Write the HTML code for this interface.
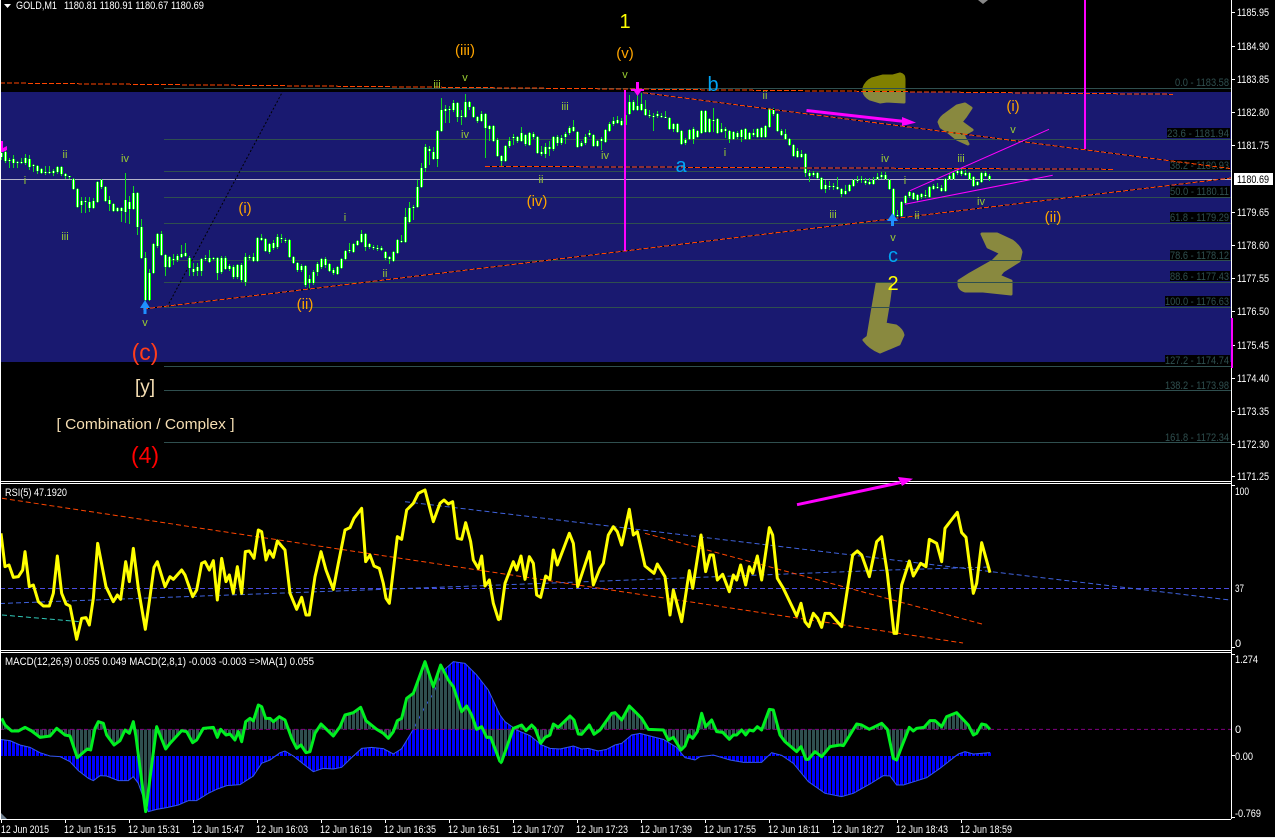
<!DOCTYPE html>
<html><head><meta charset="utf-8"><title>GOLD,M1</title>
<style>
html,body{margin:0;padding:0;background:#000}
svg{display:block;font-family:"Liberation Sans",sans-serif}
.a{fill:#fff;font-size:11px}
.f{fill:#2f4f4f;font-size:11px;text-anchor:end}
.s{fill:#9acd32;font-size:11px;text-anchor:middle}
.o{fill:#ffa500;font-size:15px;text-anchor:middle}
.b{fill:#00a5f5;font-size:20px;text-anchor:middle}
</style></head><body>
<svg width="1275" height="838" viewBox="0 0 1275 838" xmlns="http://www.w3.org/2000/svg">
<defs>
<linearGradient id="ol" gradientUnits="userSpaceOnUse" x1="0" y1="0" x2="0" y2="838"><stop offset=".1098" stop-color="#808000"/><stop offset=".1098" stop-color="#89893f"/></linearGradient>
<pattern id="pb" patternUnits="userSpaceOnUse" width="12" height="12"><rect width="9" height="12" fill="#0000ff"/></pattern>
<pattern id="pg" patternUnits="userSpaceOnUse" width="12" height="12"><rect width="9" height="12" fill="#2f4f4f"/></pattern>
<path id="bd" d="M1.5 153V157M5.5 152V161M9.5 160V161M13.5 159V163M17.5 162V163M21.5 162V163M25.5 158V163M29.5 159V167M33.5 165V166M37.5 166V171M41.5 169V173M45.5 172V173M49.5 172V173M53.5 171V173M57.5 167V172M61.5 167V174M65.5 174V176M69.5 176V177M73.5 179V189M77.5 189V207M81.5 201V205M85.5 201V202M89.5 202V208M93.5 201V208M97.5 182V202M101.5 180V187M105.5 187V201M109.5 200V204M113.5 204V211M117.5 208V211M121.5 208V211M125.5 200V212M129.5 202V209M133.5 193V209M137.5 193V227M141.5 227V258M145.5 258V300M149.5 273V300M153.5 244V273M157.5 234V246M161.5 234V255M165.5 255V267M169.5 257V267M173.5 259V260M177.5 256V260M181.5 254V257M185.5 253V256M189.5 258V268M193.5 269V272M197.5 267V271M201.5 259V271M205.5 258V259M209.5 258V262M213.5 258V259M217.5 258V273M221.5 258V272M225.5 258V269M229.5 266V269M233.5 267V277M237.5 265V277M241.5 265V280M245.5 257V282M249.5 257V258M253.5 257V261M257.5 238V261M261.5 238V240M265.5 239V251M269.5 244V252M273.5 243V248M277.5 237V247M281.5 238V239M285.5 240V241M289.5 240V257M293.5 257V263M297.5 263V270M301.5 266V270M305.5 266V285M309.5 279V283M313.5 272V283M317.5 264V272M321.5 259V267M325.5 259V265M329.5 264V271M333.5 270V273M337.5 267V274M341.5 259V268M345.5 251V259M349.5 250V251M353.5 244V252M357.5 241V245M361.5 234V242M365.5 234V247M369.5 244V247M373.5 247V248M377.5 248V249M381.5 248V250M385.5 252V258M389.5 257V259M393.5 252V261M397.5 240V253M401.5 241V242M405.5 217V242M409.5 208V222M413.5 207V208M417.5 187V207M421.5 168V187M425.5 147V168M429.5 149V151M433.5 152V159M437.5 131V159M441.5 110V131M445.5 109V111M449.5 109V110M453.5 103V110M457.5 103V117M461.5 116V117M465.5 102V117M469.5 102V107M473.5 107V117M477.5 117V121M481.5 114V121M485.5 114V128M489.5 126V129M493.5 126V141M497.5 140V156M501.5 156V161M505.5 146V161M509.5 141V146M513.5 137V138M517.5 137V141M521.5 133V141M525.5 135V144M529.5 133V145M533.5 134V137M537.5 137V153M541.5 152V154M545.5 147V154M549.5 147V149M553.5 137V149M557.5 137V143M561.5 138V143M565.5 134V137M569.5 128V133M573.5 127V131M577.5 132V147M581.5 143V146M585.5 137V143M589.5 133V135M593.5 135V146M597.5 141V146M601.5 139V141M605.5 130V142M609.5 124V131M613.5 121V124M617.5 120V123M621.5 121V125M625.5 115V125M629.5 102V114M633.5 102V110M637.5 106V110M641.5 104V110M645.5 109V115M649.5 115V116M653.5 116V117M657.5 114V116M661.5 116V117M665.5 117V118M669.5 118V129M673.5 124V129M677.5 124V132M681.5 131V144M685.5 140V143M689.5 130V139M693.5 129V139M697.5 131V137M701.5 111V133M705.5 111V132M709.5 119V132M713.5 120V121M717.5 119V133M721.5 129V132M725.5 129V131M729.5 131V139M733.5 132V139M737.5 133V137M741.5 130V137M745.5 129V139M749.5 133V139M753.5 133V135M757.5 129V137M761.5 128V137M765.5 126V137M769.5 109V127M773.5 109V114M777.5 114V131M781.5 131V135M785.5 134V139M789.5 139V145M793.5 145V156M797.5 151V157M801.5 154V157M805.5 154V173M809.5 173V176M813.5 173V175M817.5 173V178M821.5 178V189M825.5 185V189M829.5 186V187M833.5 186V187M837.5 187V189M841.5 189V194M845.5 191V194M849.5 185V191M853.5 180V186M857.5 180V181M861.5 179V180M865.5 181V183M869.5 182V184M873.5 180V184M877.5 177V179M881.5 175V177M885.5 175V179M889.5 180V189M893.5 189V216M897.5 215V216M901.5 202V216M905.5 196V203M909.5 192V196M913.5 193V199M917.5 195V200M921.5 194V197M925.5 195V196M929.5 187V197M933.5 186V189M937.5 187V188M941.5 188V191M945.5 179V191M949.5 176V179M953.5 173V179M957.5 171V173M961.5 171V174M965.5 173V175M969.5 173V179M973.5 177V186M977.5 182V185M981.5 173V182M985.5 173V176M989.5 176V179"/>
</defs>

<!-- main window -->
<rect x="1" y="92" width="1230" height="270" fill="#191970"/>

<!-- drawn blobs -->
<g fill="url(#ol)" stroke="url(#ol)" stroke-width="3" stroke-linejoin="round">
<path d="M864 88Q866 82 872 79L883 76 893 76 900 74Q904 75 904 79L904 102 887 101 880 102 870 99Q865 96 864 92Z"/>
<path d="M939 122Q941 117 946 114L957 106 965 104 971 108 965 117 961 122 972 130 963 135 968 144 957 139 947 131 941 127Z"/>
<path d="M982 234L997 234 1012 241Q1020 247 1021 252L1019 261 1003 271 999 276 1011 281 1011 294 983 291 965 291Q959 289 959 284L959 281 970 274 993 261 1001 253 988 247Z"/>
<path d="M877 284L891 284 889 300 885 324 896 326Q902 330 903 335L899 344 880 352Q870 348 864 340L868 337 872 313Z"/>
</g>

<!-- fibo levels -->
<g stroke="#2f4f4f" stroke-width="1" fill="none" shape-rendering="crispEdges">
<path d="M164 88.5H1231M164 139.5H1231M164 171.5H1231M164 197.5H1231M164 223.5H1231M164 260.5H1231M164 282.5H1231M164 307.5H1231M164 366.5H1231M164 390.5H1231M164 442.5H1231"/>
</g>
<g fill="#000">
<rect x="1167" y="128" width="63" height="10"/><rect x="1170" y="160" width="60" height="10"/><rect x="1170" y="186" width="60" height="11"/><rect x="1170" y="212" width="60" height="10"/><rect x="1170" y="250" width="60" height="10"/><rect x="1170" y="271" width="60" height="10"/><rect x="1165" y="296" width="65" height="10"/><rect x="1165" y="355" width="65" height="7"/>
</g>
<g>
<text class="f" x="1229" y="86" textLength="54" lengthAdjust="spacingAndGlyphs">0.0 - 1183.58</text>
<text class="f" x="1229" y="137" textLength="62" lengthAdjust="spacingAndGlyphs">23.6 - 1181.94</text>
<text class="f" x="1229" y="169" textLength="59" lengthAdjust="spacingAndGlyphs">38.2 - 1180.93</text>
<text class="f" x="1229" y="195" textLength="59" lengthAdjust="spacingAndGlyphs">50.0 - 1180.11</text>
<text class="f" x="1229" y="221" textLength="59" lengthAdjust="spacingAndGlyphs">61.8 - 1179.29</text>
<text class="f" x="1229" y="259" textLength="59" lengthAdjust="spacingAndGlyphs">78.6 - 1178.12</text>
<text class="f" x="1229" y="280" textLength="59" lengthAdjust="spacingAndGlyphs">88.6 - 1177.43</text>
<text class="f" x="1229" y="305" textLength="64" lengthAdjust="spacingAndGlyphs">100.0 - 1176.63</text>
<text class="f" x="1229" y="364" textLength="64" lengthAdjust="spacingAndGlyphs">127.2 - 1174.74</text>
<text class="f" x="1229" y="389" textLength="64" lengthAdjust="spacingAndGlyphs">138.2 - 1173.98</text>
<text class="f" x="1229" y="441" textLength="64" lengthAdjust="spacingAndGlyphs">161.8 - 1172.34</text>
</g>

<!-- bid line -->
<path d="M1 179.5H1231" stroke="#b4b4c8" stroke-width="1" shape-rendering="crispEdges"/>

<!-- black dotted -->
<path d="M167 307L284 89" stroke="#000" stroke-width="1" stroke-dasharray="2 2" fill="none"/>

<!-- candles: wicks -->
<path shape-rendering="crispEdges" fill="none" stroke="#10dc20" stroke-width="1" d="M1.5 150V160M5.5 150V163M9.5 158V168M13.5 155V168M17.5 161V168M21.5 158V164M25.5 154V165M29.5 155V170M33.5 164V172M37.5 165V174M41.5 168V174M45.5 166V175M49.5 166V174M53.5 169V176M57.5 166V174M61.5 166V176M65.5 173V179M69.5 176V179M73.5 178V190M77.5 188V208M81.5 197V213M85.5 197V213M89.5 197V212M93.5 198V209M97.5 181V203M101.5 179V189M105.5 186V202M109.5 196V211M113.5 203V212M117.5 207V212M121.5 207V222M125.5 173V223M129.5 196V224M133.5 186V210M137.5 192V235M141.5 219V259M145.5 252V305M149.5 269V301M153.5 243V274M157.5 233V248M161.5 231V256M165.5 254V276M169.5 256V268M173.5 254V265M177.5 254V262M181.5 245V258M185.5 243V257M189.5 256V276M193.5 263V276M197.5 263V276M201.5 258V276M205.5 255V261M209.5 250V263M213.5 257V260M217.5 257V280M221.5 256V274M225.5 256V270M229.5 264V271M233.5 265V279M237.5 264V279M241.5 263V282M245.5 253V286M249.5 255V260M253.5 253V262M257.5 237V262M261.5 234V241M265.5 238V252M269.5 243V254M273.5 240V250M277.5 234V249M281.5 234V243M285.5 238V243M289.5 239V258M293.5 256V264M297.5 262V272M301.5 264V272M305.5 265V287M309.5 275V289M313.5 270V285M317.5 262V276M321.5 258V269M325.5 257V268M329.5 263V272M333.5 268V275M337.5 266V275M341.5 258V269M345.5 250V260M349.5 243V253M353.5 243V253M357.5 240V246M361.5 230V243M365.5 233V251M369.5 243V249M373.5 245V250M377.5 245V251M381.5 246V251M385.5 251V260M389.5 256V264M393.5 251V262M397.5 239V254M401.5 235V243M405.5 208V243M409.5 202V223M413.5 205V220M417.5 180V208M421.5 163V188M425.5 144V172M429.5 146V165M433.5 147V160M437.5 130V167M441.5 98V132M445.5 105V123M449.5 106V123M453.5 100V112M457.5 102V122M461.5 110V125M465.5 94V118M469.5 101V110M473.5 106V118M477.5 116V123M481.5 111V122M485.5 113V158M489.5 125V141M493.5 125V142M497.5 138V157M501.5 155V167M505.5 145V162M509.5 137V148M513.5 134V145M517.5 136V143M521.5 127V142M525.5 134V146M529.5 132V146M533.5 132V139M537.5 136V154M541.5 146V156M545.5 143V158M549.5 141V156M553.5 136V151M557.5 135V146M561.5 135V145M565.5 132V144M569.5 126V135M573.5 120V132M577.5 131V148M581.5 141V147M585.5 134V145M589.5 130V137M593.5 134V147M597.5 140V147M601.5 137V150M605.5 129V143M609.5 122V132M613.5 117V126M617.5 116V124M621.5 118V126M625.5 113V126M629.5 95V115M633.5 100V111M637.5 90V111M641.5 93V111M645.5 100V116M649.5 110V118M653.5 113V131M657.5 111V118M661.5 113V118M665.5 111V118M669.5 117V130M673.5 123V132M677.5 123V133M681.5 130V145M685.5 138V145M689.5 129V140M693.5 127V144M697.5 130V138M701.5 110V134M705.5 110V133M709.5 118V133M713.5 108V132M717.5 118V134M721.5 123V133M725.5 127V138M729.5 130V143M733.5 131V140M737.5 131V139M741.5 129V142M745.5 128V140M749.5 132V140M753.5 129V137M757.5 128V138M761.5 127V138M765.5 125V138M769.5 108V128M773.5 108V116M777.5 113V132M781.5 129V136M785.5 129V140M789.5 138V146M793.5 144V157M797.5 148V158M801.5 150V158M805.5 153V177M809.5 170V182M813.5 171V177M817.5 172V179M821.5 177V190M825.5 180V193M829.5 181V190M833.5 183V190M837.5 177V190M841.5 188V197M845.5 185V195M849.5 184V192M853.5 179V187M857.5 176V183M861.5 176V183M865.5 178V185M869.5 178V185M873.5 177V185M877.5 173V180M881.5 172V179M885.5 172V180M889.5 179V190M893.5 188V217M897.5 210V217M901.5 201V217M905.5 195V204M909.5 191V198M913.5 192V200M917.5 194V202M921.5 193V199M925.5 190V198M929.5 186V198M933.5 184V190M937.5 183V189M941.5 185V192M945.5 178V192M949.5 173V180M953.5 171V180M957.5 169V175M961.5 169V176M965.5 170V176M969.5 172V180M973.5 176V187M977.5 181V186M981.5 172V183M985.5 171V177M989.5 174V181"/>
<!-- candles: bodies -->
<use href="#bd" fill="none" stroke="#00ff00" stroke-width="3" shape-rendering="crispEdges"/>
<use href="#bd" fill="none" stroke="#fff" stroke-width="1" shape-rendering="crispEdges"/>

<!-- trend lines main -->
<g fill="none" stroke-width="1" shape-rendering="crispEdges">
<g stroke="#000"><path d="M0 83L1173 94.3M643 92.7L1230 168.5M485 166.3L1113 169.3M143 309L1231 178"/></g>
<g stroke="#ff4500" stroke-dasharray="5 2"><path d="M0 83L1173 94.3M643 92.7L1230 168.5M485 166.3L1113 169.3M143 309L1231 178"/></g>
</g>

<!-- magenta -->
<g fill="#ff00ff" stroke="none">
<rect x="624" y="90" width="2" height="161"/>
<rect x="1084" y="0" width="2" height="149"/>
<path d="M1 141H3V148L7 146V150L3 152H1Z"/>
<rect x="636" y="82" width="3" height="8"/>
<path d="M631 89H644V91H641L637.5 96 634 91H631Z"/>
<path d="M902 117L916 122.6 902 126Z"/>
</g>
<path d="M806.5 110.5L905 121.5" stroke="#ff00ff" stroke-width="3" fill="none"/>
<path d="M910 190.7L1049 129.3M905 204.3L1052.7 175.3" stroke="#ff00ff" stroke-width="1" fill="none"/>

<!-- blue up arrows -->
<g fill="#1e90ff">
<path d="M145 300L150 308H146.5V314H143.5V308H140Z"/>
<path d="M892.5 213L898 221H894V226H891V221H887Z"/>
</g>

<!-- wave labels -->
<g>
<text x="625" y="28" fill="#ffff00" font-size="20" text-anchor="middle">1</text>
<text x="893" y="290" fill="#ffff00" font-size="20" text-anchor="middle">2</text>
<text class="o" x="625" y="58">(v)</text>
<text class="o" x="465" y="55">(iii)</text>
<text class="o" x="245" y="213">(i)</text>
<text class="o" x="305" y="309">(ii)</text>
<text class="o" x="537" y="206">(iv)</text>
<text class="o" x="1013" y="111">(i)</text>
<text class="o" x="1053" y="222">(ii)</text>
<text class="s" x="465" y="81">v</text><text class="s" x="625" y="78">v</text><text class="s" x="437" y="88">iii</text>
<text class="s" x="65" y="158">ii</text><text class="s" x="25" y="184">i</text><text class="s" x="125" y="162">iv</text><text class="s" x="65" y="240">iii</text>
<text class="s" x="345" y="221">i</text><text class="s" x="385" y="277">ii</text><text class="s" x="145" y="326">v</text>
<text class="s" x="465" y="138">iv</text><text class="s" x="565" y="110">iii</text><text class="s" x="605" y="159">iv</text><text class="s" x="541" y="183">ii</text>
<text class="s" x="765" y="99">ii</text><text class="s" x="725" y="156">i</text><text class="s" x="833" y="218">iii</text>
<text class="s" x="885" y="162">iv</text><text class="s" x="905" y="184">i</text><text class="s" x="961" y="162">iii</text><text class="s" x="1013" y="133">v</text>
<text class="s" x="981" y="205">iv</text><text class="s" x="917" y="219">ii</text><text class="s" x="893" y="241">v</text>
<text class="b" x="713" y="91">b</text><text class="b" x="681" y="172">a</text><text class="b" x="893" y="262">c</text>
<text x="145" y="360" fill="#ff3d1a" font-size="23" text-anchor="middle">(c)</text>
<text x="145" y="393" fill="#f5deb3" font-size="19" text-anchor="middle">[y]</text>
<text x="145.5" y="429" fill="#f5deb3" font-size="15" text-anchor="middle" textLength="178" lengthAdjust="spacingAndGlyphs">[ Combination / Complex ]</text>
<text x="145" y="463" fill="#ff0000" font-size="23" text-anchor="middle">(4)</text>
</g>
<path d="M978 0H988L983 4Z" fill="#888"/>

<!-- header -->
<path d="M4 4H11L7.5 8Z" fill="#fff"/>
<text class="a" x="16" y="9" textLength="41" lengthAdjust="spacingAndGlyphs">GOLD,M1</text>
<text class="a" x="64" y="9" textLength="140" lengthAdjust="spacingAndGlyphs">1180.81 1180.91 1180.67 1180.69</text>

<!-- RSI window -->
<g fill="none">
<path d="M0 588.5H1231" stroke="#4a4ae0" stroke-dasharray="5 3"/>
<path d="M0 603.5L500 585 890 570 990 567" stroke="#3f62dc" stroke-dasharray="5 3"/>
<path d="M405 501.7L1000 572.7 1230 600" stroke="#3f62dc" stroke-dasharray="5 3"/>
<path d="M2 615L80 621.7" stroke="#30c8b8" stroke-dasharray="5 3"/>
<path d="M2 498.3L963 643M645 533.3L983 624.3" stroke="#ff4500" stroke-dasharray="5 3"/>
</g>
<g fill="none" stroke="#ffff00" stroke-width="9" stroke-linejoin="round">
<polyline transform="translate(0 480) scale(.33333)" points="3,160 15,260 27,255 40,292 55,290 68,270 75,215 88,320 100,315 115,365 130,378 148,378 160,340 172,228 185,340 198,372 210,378 230,478 245,415 258,413 268,435 280,355 293,190 318,320 340,365 352,345 362,358 377,245 388,305 400,205 415,325 436,448 450,350 462,262 472,245 495,320 510,290 520,298 545,270 555,285 578,350 590,330 605,250 615,245 628,270 640,242 652,360 665,235 678,305 688,285 700,340 712,260 725,340 736,215 748,213 762,235 775,150 785,155 798,240 808,212 820,232 832,183 855,210 870,340 890,388 905,352 918,405 928,405 945,290 963,215 978,270 1000,328 1015,250 1035,150 1050,143 1062,115 1085,85 1097,245 1110,225 1122,258 1138,265 1150,310 1158,355 1168,370 1180,270 1192,170 1205,178 1220,90 1240,70 1255,40 1275,30 1300,125 1320,70 1332,60 1345,72 1358,65 1372,175 1385,178 1397,128 1412,185 1420,240 1435,265 1445,228 1455,318 1468,300 1480,370 1495,418 1500,420"/>
<polyline transform="translate(500 480) scale(.33333)" points="0,420 15,310 40,245 50,270 63,228 75,298 88,230 100,250 110,345 122,352 137,288 150,298 160,210 172,255 208,160 220,190 233,320 268,215 280,315 300,265 310,250 325,165 340,140 352,155 365,195 388,88 400,165 412,155 435,258 462,280 472,252 495,290 510,405 520,330 545,425 568,272 578,325 603,165 617,275 630,225 640,225 652,300 668,283 688,335 700,285 710,300 722,255 737,315 748,260 758,280 772,228 785,300 808,143 818,165 832,295 850,325 890,408 903,370 915,425 927,440 940,400 953,415 965,442 975,400 990,400 1025,440 1058,225 1072,213 1085,225 1108,290 1130,185 1145,170 1162,280 1182,460 1190,460 1205,315 1228,243 1240,288 1262,250 1278,260 1288,178 1310,190 1325,245 1335,145 1372,97 1385,158 1398,172 1420,340 1430,310 1445,188 1470,278"/>
</g>
<text class="a" x="5" y="496" textLength="62" lengthAdjust="spacingAndGlyphs">RSI(5) 47.1920</text>

<!-- MACD window -->
<g transform="translate(0 650) scale(.33333)">
<polygon fill="url(#pb)" points="0,318 0,268 30,272 60,285 90,292 120,308 150,318 180,320 210,335 235,362 265,385 280,392 300,377 320,378 355,392 385,392 400,380 415,400 445,485 470,478 500,473 535,465 565,452 590,452 625,430 650,418 680,407 720,404 760,378 785,340 810,330 840,308 855,303 880,318 910,342 940,365 970,355 1000,357 1025,352 1060,318 1085,295 1115,292 1150,296 1180,312 1205,296 1240,238 1275,170 1300,130 1330,62 1360,35 1395,40 1430,75 1465,120 1500,195 1500,318"/>
<polyline fill="none" stroke="#3355ee" stroke-width="3" points="0,268 30,272 60,285 90,292 120,308 150,318 180,320 210,335 235,362 265,385 280,392 300,377 320,378 355,392 385,392 400,380 415,400 445,485 470,478 500,473 535,465 565,452 590,452 625,430 650,418 680,407 720,404 760,378 785,340 810,330 840,308 855,303 880,318 910,342 940,365 970,355 1000,357 1025,352 1060,318 1085,295 1115,292 1150,296 1180,312 1205,296 1240,238 1275,170 1300,130 1330,62 1360,35 1395,40 1430,75 1465,120 1500,195"/>
<polygon fill="url(#pg)" points="5,238 5,205 15,225 35,243 55,243 75,232 95,243 120,262 150,258 170,235 195,255 210,258 232,323 262,297 272,300 285,235 295,215 310,220 320,255 342,285 360,272 375,240 388,250 400,215 408,260 437,485 470,230 497,297 510,280 545,242 560,245 578,278 590,270 610,235 640,232 652,262 662,238 678,255 690,252 705,270 715,245 725,275 737,215 750,205 760,213 775,165 785,170 797,205 810,205 820,215 838,200 855,210 875,265 890,295 903,285 918,308 930,305 945,250 963,222 1000,258 1020,230 1035,195 1060,188 1082,172 1098,212 1130,238 1150,250 1165,265 1180,245 1192,212 1205,205 1220,145 1240,130 1275,35 1300,110 1322,45 1345,90 1360,110 1385,185 1400,168 1415,195 1430,238 1445,230 1460,262 1472,262 1500,335 1500,238"/>
<path d="M0 238H1500" stroke="#800080" stroke-width="3" stroke-dasharray="12 9"/>
<polyline fill="none" stroke="#00f020" stroke-width="9" stroke-linejoin="round" points="5,205 15,225 35,243 55,243 75,232 95,243 120,262 150,258 170,235 195,255 210,258 232,323 262,297 272,300 285,235 295,215 310,220 320,255 342,285 360,272 375,240 388,250 400,215 408,260 437,485 470,230 497,297 510,280 545,242 560,245 578,278 590,270 610,235 640,232 652,262 662,238 678,255 690,252 705,270 715,245 725,275 737,215 750,205 760,213 775,165 785,170 797,205 810,205 820,215 838,200 855,210 875,265 890,295 903,285 918,308 930,305 945,250 963,222 1000,258 1020,230 1035,195 1060,188 1082,172 1098,212 1130,238 1150,250 1165,265 1180,245 1192,212 1205,205 1220,145 1240,130 1275,35 1300,110 1322,45 1345,90 1360,110 1385,185 1400,168 1415,195 1430,238 1445,230 1460,262 1472,262 1500,335"/>
</g>
<g transform="translate(500 650) scale(.33333)">
<polygon fill="url(#pb)" points="0,318 0,195 15,215 50,240 90,257 125,285 150,295 180,297 220,288 245,297 265,295 295,303 320,298 345,285 365,280 395,255 420,250 450,258 490,268 530,292 555,323 585,330 600,320 640,315 690,330 730,337 785,337 815,308 845,316 880,340 925,395 975,430 1025,440 1060,430 1110,402 1150,377 1170,378 1190,405 1210,405 1280,383 1320,355 1375,312 1395,305 1420,312 1473,308 1473,318"/>
<polyline fill="none" stroke="#3355ee" stroke-width="3" points="0,195 15,215 50,240 90,257 125,285 150,295 180,297 220,288 245,297 265,295 295,303 320,298 345,285 365,280 395,255 420,250 450,258 490,268 530,292 555,323 585,330 600,320 640,315 690,330 730,337 785,337 815,308 845,316 880,340 925,395 975,430 1025,440 1060,430 1110,402 1150,377 1170,378 1190,405 1210,405 1280,383 1320,355 1375,312 1395,305 1420,312 1470,308"/>
<polygon fill="url(#pg)" points="0,238 0,340 5,335 40,235 65,225 78,242 95,225 105,235 122,280 135,262 150,255 160,222 175,232 210,198 222,210 235,252 245,253 268,225 282,253 300,240 335,190 345,188 365,210 388,168 410,190 425,205 445,238 490,240 505,270 520,262 543,300 555,288 567,255 578,265 592,245 605,190 617,230 635,210 650,245 668,247 688,268 700,255 710,255 725,240 737,255 748,240 760,243 772,230 785,240 808,178 820,180 840,255 855,275 890,305 903,290 918,328 925,328 945,305 965,320 990,290 1020,285 1030,287 1070,222 1085,225 1108,238 1145,220 1162,238 1180,325 1190,330 1205,290 1228,232 1240,243 1250,235 1272,232 1290,212 1305,212 1325,230 1340,200 1370,188 1405,225 1420,255 1430,250 1445,222 1458,225 1470,238"/>
<path d="M0 238H2193" stroke="#800080" stroke-width="3" stroke-dasharray="12 9"/>
<polyline fill="none" stroke="#00f020" stroke-width="9" stroke-linejoin="round" points="0,340 5,335 40,235 65,225 78,242 95,225 105,235 122,280 135,262 150,255 160,222 175,232 210,198 222,210 235,252 245,253 268,225 282,253 300,240 335,190 345,188 365,210 388,168 410,190 425,205 445,238 490,240 505,270 520,262 543,300 555,288 567,255 578,265 592,245 605,190 617,230 635,210 650,245 668,247 688,268 700,255 710,255 725,240 737,255 748,240 760,243 772,230 785,240 808,178 820,180 840,255 855,275 890,305 903,290 918,328 925,328 945,305 965,320 990,290 1020,285 1030,287 1070,222 1085,225 1108,238 1145,220 1162,238 1180,325 1190,330 1205,290 1228,232 1240,243 1250,235 1272,232 1290,212 1305,212 1325,230 1340,200 1370,188 1405,225 1420,255 1430,250 1445,222 1458,225 1470,238"/>
</g>
<text class="a" x="5" y="665" textLength="309" lengthAdjust="spacingAndGlyphs">MACD(12,26,9) 0.055 0.049  MACD(2,8,1) -0.003 -0.003  =&gt;MA(1) 0.055</text>
<path d="M1 813L7 819H1Z" fill="#708090"/>

<!-- window frames -->
<g stroke="#fff" stroke-width="1" fill="none" shape-rendering="crispEdges">
<path d="M0.5 0V819M1231.5 0V819M0 481.5H1231M0 483.5H1231M0 650.5H1231M0 652.5H1231M0 819.5H1231"/>
<path d="M1232 12.5H1235M1232 46.5H1235M1232 79.5H1235M1232 112.5H1235M1232 145.5H1235M1232 212.5H1235M1232 245.5H1235M1232 278.5H1235M1232 311.5H1235M1232 345.5H1235M1232 378.5H1235M1232 411.5H1235M1232 444.5H1235M1232 476.5H1235M1232 485.5H1235M1232 647.5H1235M1232 654.5H1235M1232 755.5H1235M1232 817.5H1235"/>
<path d="M1.5 820V823M65.5 820V823M129.5 820V823M193.5 820V823M257.5 820V823M321.5 820V823M385.5 820V823M449.5 820V823M513.5 820V823M577.5 820V823M641.5 820V823M705.5 820V823M769.5 820V823M833.5 820V823M897.5 820V823M961.5 820V823"/>
</g>
<!-- overlays over frame -->
<rect x="1231" y="318" width="2" height="50" fill="#ff00ff"/>
<path d="M797 504.7L900 482.7" stroke="#ff00ff" stroke-width="3" fill="none"/>
<path d="M898 477L913 478.7 902 486Z" fill="#ff00ff"/>

<!-- price axis -->
<g>
<text class="a" x="1237" y="16" textLength="32" lengthAdjust="spacingAndGlyphs">1185.95</text>
<text class="a" x="1237" y="50" textLength="32" lengthAdjust="spacingAndGlyphs">1184.90</text>
<text class="a" x="1237" y="83" textLength="32" lengthAdjust="spacingAndGlyphs">1183.85</text>
<text class="a" x="1237" y="116" textLength="32" lengthAdjust="spacingAndGlyphs">1182.80</text>
<text class="a" x="1237" y="149" textLength="32" lengthAdjust="spacingAndGlyphs">1181.75</text>
<rect x="1234" y="173" width="39" height="12" fill="#fff"/>
<text x="1237" y="183" fill="#000" font-size="11" textLength="32" lengthAdjust="spacingAndGlyphs">1180.69</text>
<text class="a" x="1237" y="216" textLength="32" lengthAdjust="spacingAndGlyphs">1179.65</text>
<text class="a" x="1237" y="249" textLength="32" lengthAdjust="spacingAndGlyphs">1178.60</text>
<text class="a" x="1237" y="282" textLength="32" lengthAdjust="spacingAndGlyphs">1177.55</text>
<text class="a" x="1237" y="315" textLength="32" lengthAdjust="spacingAndGlyphs">1176.50</text>
<text class="a" x="1237" y="349" textLength="32" lengthAdjust="spacingAndGlyphs">1175.45</text>
<text class="a" x="1237" y="382" textLength="32" lengthAdjust="spacingAndGlyphs">1174.40</text>
<text class="a" x="1237" y="415" textLength="32" lengthAdjust="spacingAndGlyphs">1173.35</text>
<text class="a" x="1237" y="448" textLength="32" lengthAdjust="spacingAndGlyphs">1172.30</text>
<text class="a" x="1237" y="480" textLength="32" lengthAdjust="spacingAndGlyphs">1171.25</text>
<text class="a" x="1235" y="495" textLength="14" lengthAdjust="spacingAndGlyphs">100</text>
<text class="a" x="1235" y="592" textLength="9" lengthAdjust="spacingAndGlyphs">37</text>
<text class="a" x="1235" y="647">0</text>
<text class="a" x="1235" y="663" textLength="23" lengthAdjust="spacingAndGlyphs">1.274</text>
<text class="a" x="1235" y="733">0</text>
<text class="a" x="1235" y="760" textLength="18" lengthAdjust="spacingAndGlyphs">0.00</text>
<text class="a" x="1235" y="817" textLength="26" lengthAdjust="spacingAndGlyphs">-0.769</text>
</g>

<!-- time axis -->
<g>
<text class="a" x="1" y="833" textLength="48" lengthAdjust="spacingAndGlyphs">12 Jun 2015</text>
<text class="a" x="64" y="833" textLength="52" lengthAdjust="spacingAndGlyphs">12 Jun 15:15</text>
<text class="a" x="128" y="833" textLength="52" lengthAdjust="spacingAndGlyphs">12 Jun 15:31</text>
<text class="a" x="192" y="833" textLength="52" lengthAdjust="spacingAndGlyphs">12 Jun 15:47</text>
<text class="a" x="256" y="833" textLength="52" lengthAdjust="spacingAndGlyphs">12 Jun 16:03</text>
<text class="a" x="320" y="833" textLength="52" lengthAdjust="spacingAndGlyphs">12 Jun 16:19</text>
<text class="a" x="384" y="833" textLength="52" lengthAdjust="spacingAndGlyphs">12 Jun 16:35</text>
<text class="a" x="448" y="833" textLength="52" lengthAdjust="spacingAndGlyphs">12 Jun 16:51</text>
<text class="a" x="512" y="833" textLength="52" lengthAdjust="spacingAndGlyphs">12 Jun 17:07</text>
<text class="a" x="576" y="833" textLength="52" lengthAdjust="spacingAndGlyphs">12 Jun 17:23</text>
<text class="a" x="640" y="833" textLength="52" lengthAdjust="spacingAndGlyphs">12 Jun 17:39</text>
<text class="a" x="704" y="833" textLength="52" lengthAdjust="spacingAndGlyphs">12 Jun 17:55</text>
<text class="a" x="768" y="833" textLength="52" lengthAdjust="spacingAndGlyphs">12 Jun 18:11</text>
<text class="a" x="832" y="833" textLength="52" lengthAdjust="spacingAndGlyphs">12 Jun 18:27</text>
<text class="a" x="896" y="833" textLength="52" lengthAdjust="spacingAndGlyphs">12 Jun 18:43</text>
<text class="a" x="960" y="833" textLength="52" lengthAdjust="spacingAndGlyphs">12 Jun 18:59</text>
</g>
<rect x="0" y="837" width="1275" height="1" fill="#eee"/>
</svg>
</body></html>
